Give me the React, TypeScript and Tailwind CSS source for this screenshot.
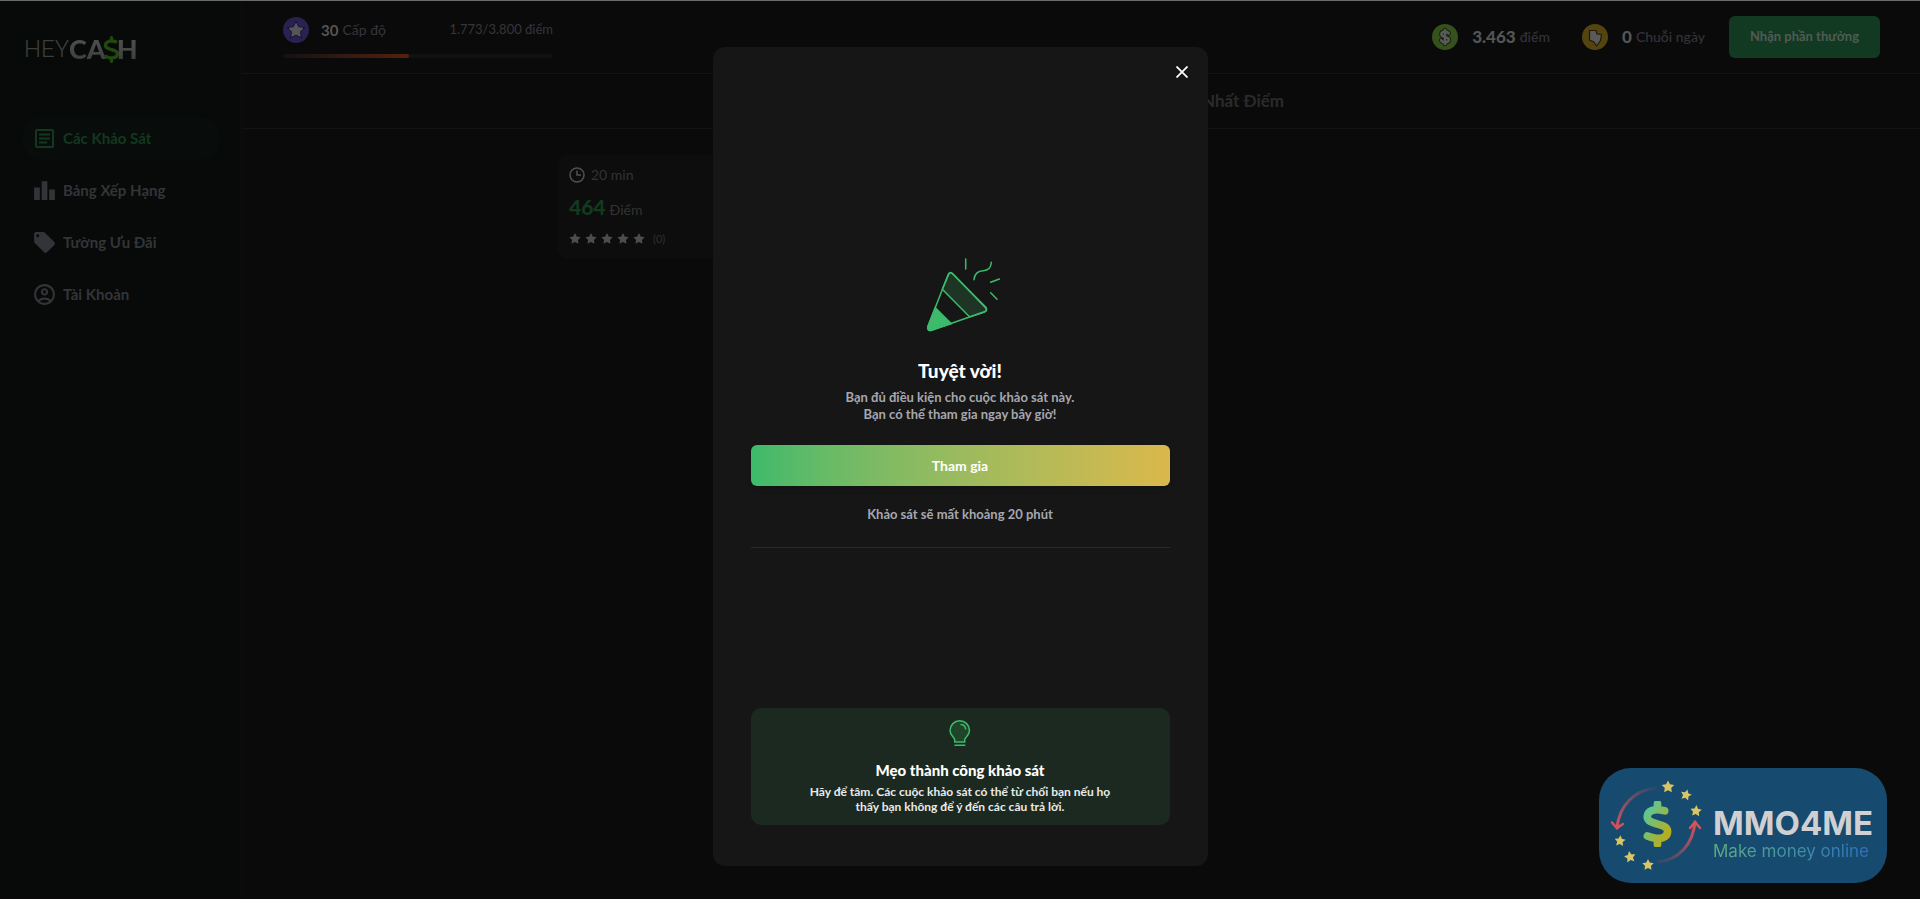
import type { ReactNode } from "react";
import { FaDollarSign } from "react-icons/fa6";
import { MdLeaderboard, MdLocalOffer, MdOutlineAccountCircle } from "react-icons/md";

const STAR_POINTS = "0,-10 2.9,-4 9.5,-3.1 4.8,1.5 5.9,8.1 0,5 -5.9,8.1 -4.8,1.5 -9.5,-3.1 -2.9,-4";

const ArticleIcon = () => (
  <svg viewBox="0 0 25 25" className="size-[25px]" fill="none" stroke="currentColor" strokeWidth="2" aria-hidden="true">
    <rect x="4" y="4" width="17" height="17" rx="1" />
    <path d="M7 8.5h11M7 12.5h11M7 16.5h8" />
  </svg>
);

const navItems = [
  { label: "Các Khảo Sát", icon: <ArticleIcon />, active: true },
  { label: "Bảng Xếp Hạng", icon: <MdLeaderboard className="size-[25px]" />, active: false },
  { label: "Tường Ưu Đãi", icon: <MdLocalOffer className="size-[25px]" />, active: false },
  { label: "Tài Khoản", icon: <MdOutlineAccountCircle className="size-[25px]" />, active: false },
];

const Sidebar = () => (
  <aside className="w-[242px] shrink-0 border-r border-[#0d0f0e] bg-[#070a09] pt-7 pr-[21px] pl-[22px]">
    <a href="#" aria-label="HEYCASH" className="flex h-10 items-center pl-0.5 text-[27px] leading-10">
      <span className="font-['Liberation_Sans_Narrow','Roboto',sans-serif] text-2xl font-light text-[#3c3e3d]">HEY</span>
      <span className="bg-linear-to-b from-[#565656] to-[#383838] bg-clip-text font-['Lato',sans-serif] font-black text-transparent">
        CA
      </span>
      <FaDollarSign className="mx-[-3px] h-[27px] w-[17px] text-[#23480f]" />
      <span className="bg-linear-to-b from-[#565656] to-[#383838] bg-clip-text font-['Lato',sans-serif] font-black text-transparent">
        H
      </span>
    </a>
    <nav className="mt-12 flex flex-col gap-[9px]">
      {navItems.map(({ label, icon, active }) => (
        <a
          key={label}
          href="#"
          className={`flex h-[43px] items-center gap-1.5 rounded-full pl-2.5 text-[15px] font-bold ${
            active ? "bg-[#080d0b] text-[#13381f]" : "text-[#343438]"
          }`}
        >
          {icon}
          {label}
        </a>
      ))}
    </nav>
  </aside>
);

const StarBadge = () => (
  <svg viewBox="0 0 26 26" className="size-[26px]" aria-hidden="true">
    <circle cx="13" cy="13" r="13" fill="#29214f" />
    <polygon points={STAR_POINTS} transform="translate(13 13.5)" fill="#17132d" />
    <polygon
      points={STAR_POINTS}
      transform="translate(13 13.5) scale(.68)"
      fill="#55555a"
      stroke="#55555a"
      strokeWidth="2"
      strokeLinejoin="round"
    />
  </svg>
);

const CoinIcon = () => (
  <svg viewBox="0 0 26 26" className="size-[26px]" aria-hidden="true">
    <circle cx="13" cy="13" r="13" fill="#35511c" />
    <g fill="none" strokeLinecap="round" strokeLinejoin="round">
      <path d="M16.7 9.5c-.6-1.3-2-1.9-3.7-1.9-2.2 0-3.6 1-3.6 2.6 0 3.8 7.4 1.7 7.4 5.4 0 1.8-1.6 2.8-3.8 2.8-1.9 0-3.3-.8-3.9-2.2M13 6v14" stroke="#15200c" strokeWidth="4.5" />
      <path d="M16.7 9.5c-.6-1.3-2-1.9-3.7-1.9-2.2 0-3.6 1-3.6 2.6 0 3.8 7.4 1.7 7.4 5.4 0 1.8-1.6 2.8-3.8 2.8-1.9 0-3.3-.8-3.9-2.2M13 6v14" stroke="#5a5a5a" strokeWidth="2.6" />
    </g>
  </svg>
);

const StreakIcon = () => (
  <svg viewBox="0 0 26 26" className="size-[26px]" aria-hidden="true">
    <circle cx="13" cy="13" r="13" fill="#54440f" />
    <path
      d="M7.5 6.5h6.5l1 3.5 4.5.5-1 6-4 5.5-2.5-4-4.5-2z"
      fill="#5a5a5a"
      stroke="#201a08"
      strokeWidth="1.2"
      strokeLinejoin="round"
    />
  </svg>
);

const Stat = ({ icon, value, label }: { icon: ReactNode; value: string; label: string }) => (
  <div className="flex items-center">
    {icon}
    <span className="ml-3.5 text-[17px] font-black text-[#555555]">{value}</span>
    <span className="ml-1 text-sm font-medium text-[#333338]">{label}</span>
  </div>
);

const Header = () => (
  <header className="flex h-[73px] items-start justify-between border-b border-[#131313] pt-[15px] pr-10 pl-[41px]">
    <div className="w-[270px]">
      <div className="flex h-7 items-center">
        <StarBadge />
        <span className="ml-3 text-[15px] font-bold text-[#555555]">30</span>
        <span className="ml-1 text-sm text-[#36363a]">Cấp độ</span>
        <span className="ml-auto text-[13px] text-[#36363a]">1.773/3.800 điểm</span>
      </div>
      <div className="mt-2.5 h-1 overflow-hidden rounded-full bg-[#0f1113]">
        <div className="h-full rounded-full bg-linear-to-r from-[#121212] to-[#562009]" style={{ width: `${(1773 / 3800) * 100}%` }} />
      </div>
    </div>
    <div className="flex h-[42px] items-center">
      <Stat icon={<CoinIcon />} value="3.463" label="điểm" />
      <div className="ml-8">
        <Stat icon={<StreakIcon />} value="0" label="Chuỗi ngày" />
      </div>
      <button type="button" className="ml-6 h-[42px] w-[151px] rounded-md bg-[#123a22] text-[13px] font-bold text-[#4f5c54]">
        Nhận phần thưởng
      </button>
    </div>
  </header>
);

const ClockIcon = () => (
  <svg viewBox="0 0 16 16" className="size-4" fill="none" stroke="currentColor" strokeWidth="1.5" aria-hidden="true">
    <circle cx="8" cy="8" r="7" />
    <path d="M8 3.5V8h4" />
  </svg>
);

const SurveyCard = () => (
  <article className="flex h-[104px] w-[250px] flex-col rounded-xl bg-[#0d0d0d] px-3 pt-2.5 text-[#303030]">
    <div className="flex h-5 items-center gap-1.5 text-sm text-[#333333]">
      <span className="text-[#505050]">
        <ClockIcon />
      </span>
      20 min
    </div>
    <div className="mt-2 flex h-7 items-baseline gap-1">
      <span className="text-[21px] leading-7 font-black text-[#113a20]">464</span>
      <span className="text-sm text-[#333333]">Điểm</span>
    </div>
    <div className="mt-2 flex h-5 items-center gap-1">
      {[0, 1, 2, 3, 4].map((star) => (
        <svg key={star} viewBox="-10 -10 20 20" className="size-3" fill="#4d4d4d" aria-hidden="true">
          <polygon points={STAR_POINTS} />
        </svg>
      ))}
      <span className="ml-1 text-[11px]">(0)</span>
    </div>
  </article>
);

const PartyIcon = () => (
  <svg viewBox="-5 1 80 76" className="h-[76px] w-20" fill="none" stroke="#3dba6c" strokeWidth="1.5" aria-hidden="true">
    <path d="M17.3 33.3 44.7 61l14.8-5q3.2-1.3 1.2-4L28 18q-3-3-4.5.7z" fill="#1e3526" />
    <path d="M10.3 51.7 26.3 67.7 6.5 74.3q-4.5 1-3.5-4z" fill="#3dba6c" />
    <path d="M23.2 18.5Q24.5 15.2 27.5 17.7L60.7 51q2.2 3-1.2 4.8L6.5 74.3q-4.5 1-3.5-4z" strokeLinejoin="round" />
    <path d="M40.7 3v10M66.3 6.3c-.3 5.5-2.8 8.2-8 8.4-6 .2-8.8 3-9.3 9M65.7 26.3l8.6-3.3M65.7 36.7l6.3 6.6" strokeLinecap="round" />
  </svg>
);

const BulbIcon = () => (
  <svg viewBox="0 0 22 26" className="h-[26px] w-[22px]" fill="none" stroke="#3dba6c" strokeWidth="1.5" aria-hidden="true">
    <path d="M5.7 22v-2.3C5.2 17 1 15.5 1 10.5a9.7 9.7 0 0 1 19.5 0c0 5-4.2 6.5-4.8 9.2V22z" fill="#1f4429" />
    <path d="M11.5 4.5c3 0 5 2 5.2 5M5.5 25.2h10.8" />
  </svg>
);

const SurveyDialog = () => (
  <div className="fixed inset-0 z-10 flex justify-center pt-[47px] pb-[33px]">
    <section
      role="dialog"
      aria-modal="true"
      aria-labelledby="dialog-title"
      className="relative flex w-full max-w-[495px] flex-col rounded-xl bg-[#161616] px-[38px] pb-[41px] text-center"
    >
      <button type="button" aria-label="Đóng" className="absolute top-[15px] right-4 flex size-5 items-center justify-center text-white">
        <svg viewBox="0 0 12 12" className="size-3" stroke="currentColor" strokeWidth="1.8" aria-hidden="true">
          <path d="M.5.5l11 11M11.5.5l-11 11" />
        </svg>
      </button>
      <div className="flex flex-1 flex-col items-center justify-center pt-[50px]">
        <PartyIcon />
        <h2 id="dialog-title" className="mt-6 text-[19px] leading-7 font-black text-white">
          Tuyệt vời!
        </h2>
        <p className="mt-1 text-[13px] leading-[17px] font-bold text-[#a5a7b0]">
          Bạn đủ điều kiện cho cuộc khảo sát này.
          <br />
          Bạn có thể tham gia ngay bây giờ!
        </p>
        <button
          type="button"
          className="mt-[22px] h-[41px] w-full rounded-md bg-linear-to-r from-[#3cba6b] to-[#dab84b] text-sm font-bold text-white shadow-md"
        >
          Tham gia
        </button>
        <p className="mt-5 text-[13px] leading-[17px] font-bold text-[#a5a7b0]">Khảo sát sẽ mất khoảng 20 phút</p>
        <hr className="mt-6 w-full border-[#2a2a2a]" />
      </div>
      <div className="flex h-[117px] flex-col items-center rounded-[10px] bg-[#1b2920] pt-3 text-white">
        <BulbIcon />
        <h3 className="mt-3.5 text-[15px] leading-5 font-black">Mẹo thành công khảo sát</h3>
        <p className="mt-1 text-xs leading-[15px] font-bold text-[#e9ebe9]">
          Hãy để tâm. Các cuộc khảo sát có thể từ chối bạn nếu họ
          <br />
          thấy bạn không để ý đến các câu trả lời.
        </p>
      </div>
    </section>
  </div>
);

const ringStars = [
  { x: 69, y: 19, size: 0.66, turn: 0 },
  { x: 87, y: 27, size: 0.58, turn: 15 },
  { x: 97, y: 43, size: 0.6, turn: 5 },
  { x: 21, y: 73, size: 0.58, turn: 5 },
  { x: 31, y: 89, size: 0.6, turn: -10 },
  { x: 49, y: 97, size: 0.6, turn: 0 },
];

const RingLogo = () => (
  <svg viewBox="0 0 110 115" className="h-[115px] w-[110px]" fill="none" strokeWidth="3" strokeLinecap="round" aria-hidden="true">
    <defs>
      <linearGradient id="dollar" x1="0" y1="0" x2="1" y2="1">
        <stop offset=".2" stopColor="#63c58e" />
        <stop offset=".8" stopColor="#b4ae20" />
      </linearGradient>
      <linearGradient id="arc-left" gradientUnits="userSpaceOnUse" x1="18" y1="60" x2="57" y2="20">
        <stop stopColor="#cf5260" />
        <stop offset="1" stopColor="#cf5260" stopOpacity="0.1" />
      </linearGradient>
      <linearGradient id="arc-right" gradientUnits="userSpaceOnUse" x1="96" y1="54" x2="58" y2="94">
        <stop stopColor="#d8525a" />
        <stop offset="1" stopColor="#d8525a" stopOpacity="0.1" />
      </linearGradient>
    </defs>
    <path d="M57 20C35 22 20 38 18 60" stroke="url(#arc-left)" />
    <path d="M13 54.5l5 5.5 6-4" stroke="#cf5260" strokeWidth="2.5" />
    <path d="M59 94c21-2 35-18 37-40" stroke="url(#arc-right)" />
    <path d="M91 60l5-6 5 6" stroke="#d8525a" strokeWidth="2.5" />
    {ringStars.map(({ x, y, size, turn }) => (
      <polygon key={`${x}-${y}`} points={STAR_POINTS} transform={`translate(${x} ${y}) rotate(${turn}) scale(${size})`} fill="#d8c565" />
    ))}
    <FaDollarSign x="44" y="33" className="h-[46px] w-[29px]" fill="url(#dollar)" stroke="url(#dollar)" strokeWidth="22" />
  </svg>
);

const WatermarkBadge = () => (
  <div className="fixed right-[33px] bottom-4 z-20 flex h-[115px] w-[288px] items-center rounded-[32px] bg-[#164a6e]">
    <RingLogo />
    <div className="ml-1 flex flex-col pt-3.5 font-['Inter',sans-serif]">
      <span className="text-[33px] leading-9 font-bold text-[#d0d0d3]">MMO4ME</span>
      <span className="bg-linear-to-r from-[#63ab83] to-[#2f6fc0] bg-clip-text text-[17px] leading-5 text-transparent">
        Make money online
      </span>
    </div>
  </div>
);

export default function App() {
  return (
    <div className="flex min-h-screen border-t border-[#6a6c6a] bg-[#0a0a0a] font-['Lato','Noto_Sans',sans-serif]">
      <Sidebar />
      <div className="min-w-0 flex-1">
        <Header />
        <div className="flex h-[55px] items-center justify-center border-b border-[#131313] pl-[324px]">
          <a href="#" className="text-[17px] font-bold text-[#2a2a2a]">
            Nhất Điểm
          </a>
        </div>
        <main className="mx-auto max-w-[1048px] pt-[26px]">
          <SurveyCard />
        </main>
      </div>
      <SurveyDialog />
      <WatermarkBadge />
    </div>
  );
}
